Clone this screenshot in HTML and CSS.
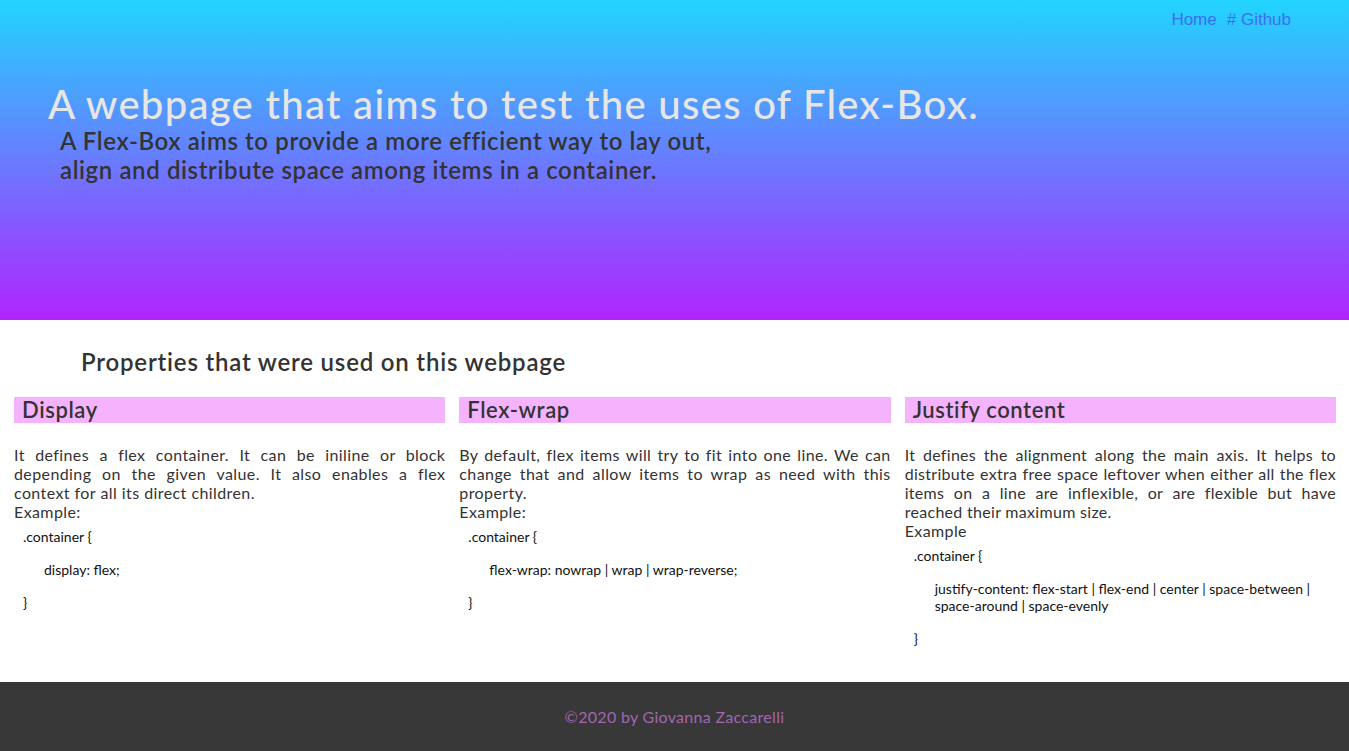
FILE: index.html
```html
<!DOCTYPE html>
<html lang="en">
<head>
<meta charset="utf-8">
<title>Flex-Box</title>
<link rel="stylesheet" href="styles.css">
</head>
<body>
<header class="hero">
  <nav class="top-nav">
    <a href="#" class="nav-link">Home</a>
    <a href="#" class="nav-link"># Github</a>
  </nav>
  <h1 class="hero-title">A webpage that aims to test the uses of Flex-Box.</h1>
  <h2 class="hero-sub">A Flex-Box aims to provide a more efficient way to lay out,<br>align and distribute space among items in a container.</h2>
</header>
<main class="props">
  <h3 class="props-title">Properties that were used on this webpage</h3>
  <div class="cards">
    <article class="card">
      <h4 class="card-title">Display</h4>
      <p class="card-text">It defines a flex container. It can be iniline or block depending on the given value. It also enables a flex context for all its direct children.</p>
      <p class="card-example">Example:</p>
      <div class="code">
        <div class="code-line">.container {</div>
        <div class="code-inner">display: flex;</div>
        <div class="code-line">}</div>
      </div>
    </article>
    <article class="card">
      <h4 class="card-title">Flex-wrap</h4>
      <p class="card-text">By default, flex items will try to fit into one line. We can change that and allow items to wrap as need with this property.</p>
      <p class="card-example">Example:</p>
      <div class="code">
        <div class="code-line">.container {</div>
        <div class="code-inner">flex-wrap: nowrap | wrap | wrap-reverse;</div>
        <div class="code-line">}</div>
      </div>
    </article>
    <article class="card">
      <h4 class="card-title">Justify content</h4>
      <p class="card-text card-text--snug">It defines the alignment along the main axis. It helps to distribute extra free space leftover when either all the flex items on a line are inflexible, or are flexible but have reached their maximum size.</p>
      <p class="card-example">Example</p>
      <div class="code">
        <div class="code-line">.container {</div>
        <div class="code-inner">justify-content: flex-start | flex-end | center | space-between | space-around | space-evenly</div>
        <div class="code-line">}</div>
      </div>
    </article>
  </div>
</main>
<footer class="site-footer">
  <p class="footer-text">©2020 by Giovanna Zaccarelli</p>
</footer>
</body>
</html>
```

FILE: styles.css
```css
* { box-sizing: border-box; }
body {
  margin: 0;
  font-family: "Lato", "Open Sans", sans-serif;
  color: #333;
  background: #fff;
}
.hero {
  height: 320px;
  background: linear-gradient(to bottom, #22d4fe 0%, #b024ff 100%);
}
.top-nav {
  display: flex;
  justify-content: flex-end;
  gap: 10px;
  padding: 10px 58px 0 0;
  height: 38px;
}
.nav-link {
  font-family: "Liberation Sans", Arial, sans-serif;
  font-size: 17px;
  line-height: 20px;
  color: #3a70f0;
  text-decoration: none;
}
.hero-title {
  margin: 42px 0 0 48px;
  font-size: 40px;
  line-height: 48px;
  font-weight: 500;
  letter-spacing: 1.3px;
  color: #e6e6e6;
}
.hero-sub {
  margin: -2px 0 0 60px;
  font-size: 24px;
  line-height: 29px;
  font-weight: 600;
  letter-spacing: 0.6px;
  color: #333;
}
.props {
  padding: 27px 13px 35px 14px;
}
.props-title {
  margin: 0 0 20px 67px;
  font-size: 24px;
  line-height: 30px;
  font-weight: 600;
  letter-spacing: 0.8px;
  color: #333;
}
.cards {
  display: grid;
  grid-template-columns: repeat(3, 1fr);
  gap: 14px;
  align-items: start;
}
.card-title {
  margin: 0 0 22px;
  padding: 0 8px;
  background: #f5b3fd;
  font-size: 22px;
  line-height: 26px;
  font-weight: 600;
  letter-spacing: 0.6px;
  color: #333;
}
.card-text, .card-example {
  margin: 0;
  font-size: 16px;
  line-height: 19px;
  font-weight: 400;
  letter-spacing: 0.4px;
  word-spacing: 0.2px;
  text-align: justify;
  color: #333;
}
.card-text--snug {
  letter-spacing: 0.3px;
  word-spacing: 0;
}
.code {
  margin-top: 8px;
  padding-left: 9px;
  font-size: 14px;
  line-height: 16.5px;
  color: #111;
}
.code-inner {
  margin: 16.5px 0 16.5px 21px;
}
.site-footer {
  background: #383838;
  height: 69px;
  display: flex;
  align-items: center;
  justify-content: center;
}
.footer-text {
  margin: 0;
  font-size: 16px;
  letter-spacing: 0.3px;
  color: #a365b0;
}
```
